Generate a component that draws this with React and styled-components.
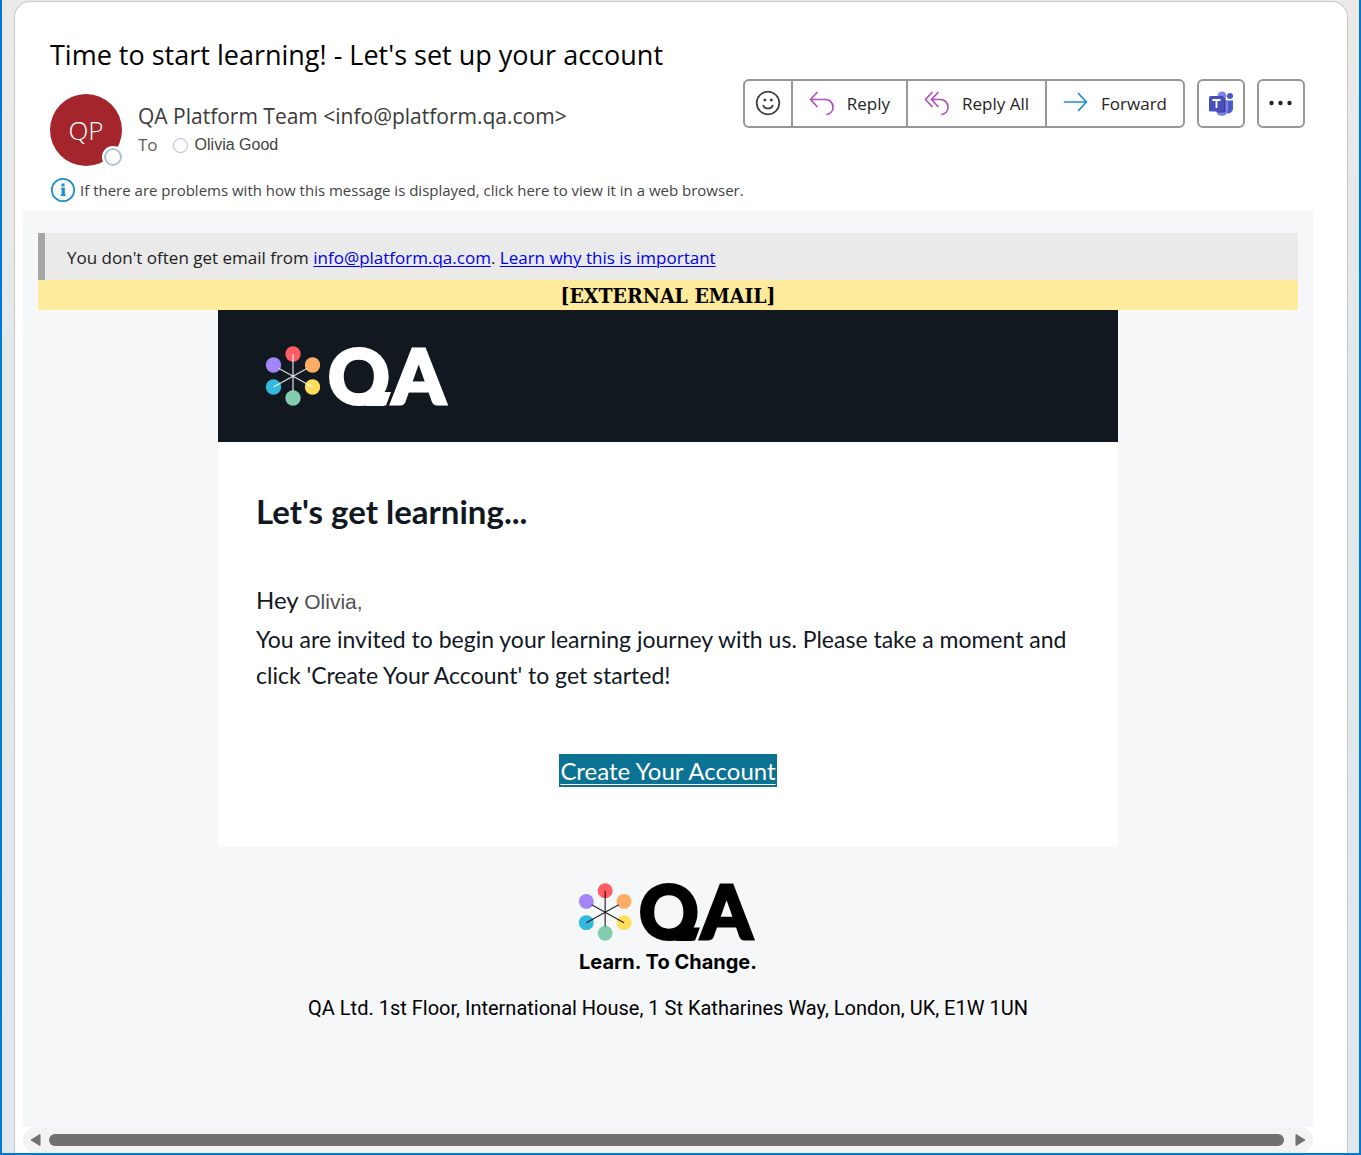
import React from "react";
import styled, { createGlobalStyle } from "styled-components";

const ui = `"Open Sans", "Noto Sans", sans-serif`;
const lato = `Lato, sans-serif`;

const Global = createGlobalStyle`
  *, *::before, *::after { box-sizing: border-box; }
  body { margin: 0; font-family: ${ui}; background: #fff; }
  h1, h2, p { margin: 0; font-weight: 400; }
  button { font: inherit; color: inherit; background: none; border: 0; padding: 0; cursor: pointer; }
`;

const Frame = styled.div`
  display: flex;
  min-height: 100vh;
  padding: 1px 11px 0 12px;
  border: solid #0078d4;
  border-width: 0 2px 2px;
  background: linear-gradient(#ebeae8, #e2e9ec 30%, #e0e8ee);
`;

const Pane = styled.main`
  flex: 1;
  min-width: 0;
  display: flex;
  flex-direction: column;
  padding: 0 34px 0 8px;
  background: #fff;
  border: 1px solid #c8c8c8;
  border-bottom: 0;
  border-radius: 16px 16px 0 0;
`;

const Header = styled.header`
  display: flex;
  flex-direction: column;
  padding: 33px 8px 7px 27px;
`;

const Subject = styled.h1`
  margin-bottom: 4px;
  font-size: 27px;
  line-height: 40px;
  color: #000;
`;

const SenderRow = styled.div`
  display: flex;
  justify-content: space-between;
  align-items: flex-start;
  gap: 24px;
`;

const Sender = styled.div`
  display: flex;
  gap: 16px;
  padding-top: 15px;
`;

const Avatar = styled.div`
  position: relative;
  display: grid;
  place-items: center;
  width: 72px;
  height: 72px;
  border-radius: 50%;
  background: #a4262c;
  color: #fff;
  font-size: 26px;
  font-weight: 300;
`;

const Presence = styled.span`
  position: absolute;
  right: -2px;
  bottom: -2px;
  width: 22px;
  height: 22px;
  border-radius: 50%;
  border: 2px solid #fff;
  background: #fff;
  box-shadow: inset 0 0 0 2px #a8c0cc;
`;

const SenderText = styled.div`
  display: flex;
  flex-direction: column;
  padding-top: 6px;
`;

const From = styled.p`
  font-size: 21px;
  line-height: 32px;
  color: #3b3a39;
`;

const To = styled.p`
  display: flex;
  align-items: center;
  line-height: 26px;
  font-size: 17px;
  color: #605e5c;
`;

const Dot = styled.span`
  width: 15px;
  height: 15px;
  margin: 0 7px 0 15px;
  border: 1px solid #a8c0cc;
  border-radius: 50%;
`;

const Recipient = styled.span`
  font-family: "Liberation Sans", Arial, sans-serif;
  font-size: 16px;
  color: #444;
`;

const Toolbar = styled.div`
  display: flex;
  gap: 12px;
`;

const Group = styled.div`
  display: flex;
  height: 49px;
  border: 2px solid #979797;
  border-radius: 6px;
`;

const Action = styled.button`
  display: flex;
  align-items: center;
  justify-content: center;
  gap: 12px;
  min-width: 44px;
  padding: 0 ${(p) => (p.$wide ? 16 : 0)}px;
  font-size: 17px;
  color: #252423;
  &:not(:last-child) { min-width: 46px; }
  & + & { border-left: 2px solid #979797; }
`;

const Notice = styled.button`
  display: flex;
  align-items: center;
  gap: 4px;
  margin-top: 11px;
  font-size: 15px;
  line-height: 26px;
  color: #444;
  text-align: left;
`;

const Mail = styled.section`
  flex: 1;
  padding: 23px 15px 32px;
  background: #f5f7f9;
`;

const Warning = styled.p`
  padding: 11px 22px 9px;
  border-left: 7px solid #a6a6a6;
  background: #eaeaea;
  font-size: 17px;
  line-height: 27px;
  color: #212121;
  a { color: #0000ee; text-underline-offset: 2px; text-decoration-thickness: 1px; }
`;

const External = styled.p`
  padding-top: 2px;
  background: #ffeb9c;
  color: #000;
  font-family: "DejaVu Serif Condensed", "DejaVu Serif", serif;
  font-size: 21px;
  font-weight: 700;
  line-height: 28px;
  text-align: center;
`;

const Letter = styled.article`
  max-width: 900px;
  margin: 0 auto;
  background: #fff;
  color: #11181f;
  font-family: ${lato};
`;

const Brand = styled.div`
  display: flex;
  padding: 36px 48px;
  background: #11181f;
`;

const Content = styled.div`
  display: flex;
  flex-direction: column;
  padding: 51px 38px 60px;
`;

const Title = styled.h2`
  font-size: 33px;
  font-weight: 700;
  line-height: 36px;
  margin-bottom: 51px;
`;

const Greeting = styled.p`
  font-size: 24px;
  line-height: 39px;
`;

const Invitation = styled.p`
  font-size: 23px;
  line-height: 36px;
`;

const Name = styled.span`
  font-family: "Liberation Sans", Arial, sans-serif;
  font-size: 21px;
  color: #505050;
`;

const Cta = styled.a`
  align-self: center;
  margin-top: 61px;
  padding: 0 1px;
  background: #0b7294;
  color: #fff;
  font-size: 24px;
  line-height: 33px;
  text-decoration: underline;
  text-decoration-thickness: 1px;
  text-underline-offset: 4px;
`;

const Footer = styled.footer`
  display: flex;
  flex-direction: column;
  align-items: center;
  padding-top: 36px;
  color: #000;
`;

const Tagline = styled.p`
  font-family: Inter, sans-serif;
  font-size: 20px;
  font-weight: 700;
  line-height: 32px;
  padding-top: 5px;
`;

const Address = styled.p`
  margin-top: 15px;
  font-family: Roboto, sans-serif;
  font-size: 20px;
  line-height: 30px;
  text-align: center;
`;

const ScrollTrack = styled.div`
  display: flex;
  align-items: center;
  gap: 8px;
  height: 26px;
  padding: 0 7px;
  border-radius: 13px;
  background: #f3f3f3;
`;

const ScrollThumb = styled.div`
  flex: 1;
  height: 12px;
  border-radius: 6px;
  background: #707070;
`;

const ScrollButton = styled.button`
  display: grid;
  width: 11px;
  &:last-child { margin-left: 3px; }
`;

const LogoSvg = styled.svg`
  display: block;
  overflow: visible;
`;

const petals = [
  ["#ff5c64", 27, 8],
  ["#ffad66", 46.5, 19],
  ["#ffde59", 46.5, 41],
  ["#83ccaf", 27, 52],
  ["#33b9de", 7.5, 41],
  ["#a286f9", 7.5, 19],
];

function QaLogo({ id, ink, width, height }) {
  return (
    <LogoSvg width={width} height={height} viewBox="0 0 184 60" role="img" aria-label="QA">
      {petals.map(([fill, x, y]) => (
        <circle key={fill} cx={x} cy={y} r="7.7" fill={fill} />
      ))}
      <path d="M27 8V45M7.5 41L41 22.5M13 22.5L46.5 41" stroke={ink} strokeWidth="1.2" opacity=".85" fill="none" />
      <clipPath id={id}>
        <rect x="56" y="-1" width="128" height="61" />
      </clipPath>
      <g clipPath={`url(#${id})`} fill={ink}>
        <text
          y="58"
          fontFamily="Lato, sans-serif"
          fontWeight="900"
          fontSize="76"
          stroke={ink}
          strokeWidth="3"
        >
          <tspan x="62">Q</tspan>
          <tspan x="126">A</tspan>
        </text>
        <path d="M94 59.5H120L125 46H112L94 52Z" />
      </g>
    </LogoSvg>
  );
}

const stroke = { fill: "none", strokeWidth: 1.7, strokeLinecap: "round", strokeLinejoin: "round" };

const Smile = () => (
  <svg width="26" height="26" viewBox="0 0 26 26" {...stroke} stroke="#3b3a39">
    <circle cx="13" cy="12" r="11.3" />
    <path d="M8.3 14.5c1.2 4 8.2 4 9.4 0" />
    <circle cx="9.8" cy="9" r="1" fill="#3b3a39" strokeWidth="1" />
    <circle cx="16.2" cy="9" r="1" fill="#3b3a39" strokeWidth="1" />
  </svg>
);

const ReplyIcon = () => (
  <svg width="26" height="26" viewBox="0 0 26 26" {...stroke} stroke="#b14fc0">
    <path d="M8 1.5L1.5 8.5L8 15.5M1.5 8.5H16.5a7.5 7.5 0 0 1 7.5 7.5a7.5 7.5 0 0 1-6 7.5" />
  </svg>
);

const ReplyAllIcon = () => (
  <svg width="26" height="26" viewBox="0 0 26 26" {...stroke} stroke="#b14fc0">
    <path d="M8 1.5L1.5 8.5L8 15.5M14 1.5L7.5 8.5L14 15.5M7.5 8.5H16.5a7.5 7.5 0 0 1 7.5 7.5a7.5 7.5 0 0 1-6 7.5" />
  </svg>
);

const ForwardIcon = () => (
  <svg width="26" height="26" viewBox="0 0 26 26" {...stroke} stroke="#1e8bcd">
    <path d="M1.5 11H23.5M15.5 2.5L23.5 11L15.5 19.5" />
  </svg>
);

const TeamsIcon = () => (
  <svg width="26" height="26" viewBox="0 0 26 26">
    <circle cx="22" cy="5" r="3" fill="#4f57c8" />
    <path d="M18 9.5H25v8.5a5 5 0 0 1-7 4z" fill="#4f57c8" />
    <circle cx="14" cy="5" r="4.5" fill="#7b83eb" />
    <path d="M8 9.5H20v9.5a6 6 0 0 1-12 0z" fill="#7b83eb" />
    <path d="M8 7H16a1.5 1.5 0 0 1 1.5 1.5V20a1.5 1.5 0 0 1-1.5 1.5H9z" fill="#3a3f94" />
    <rect x="1" y="5" width="15" height="15.5" rx="1.5" fill="#4850bb" />
    <path d="M4.5 9H12.5M8.5 9V17" stroke="#fff" strokeWidth="1.8" />
  </svg>
);

const MoreIcon = () => (
  <svg width="26" height="26" viewBox="0 0 26 26" fill="#252423">
    <circle cx="3.5" cy="12" r="2.2" />
    <circle cx="12.5" cy="12" r="2.2" />
    <circle cx="21.5" cy="12" r="2.2" />
  </svg>
);

const InfoIcon = () => (
  <svg width="26" height="26" viewBox="0 0 26 26">
    <circle cx="13" cy="13" r="11.2" fill="#fafafa" stroke="#1e8bcd" strokeWidth="1.7" />
    <path d="M11 11.5h3V18M10.5 18.3H15.5" stroke="#1e8bcd" strokeWidth="1.6" fill="none" />
    <path d="M13 11V18.5" stroke="#1e8bcd" strokeWidth="2.6" />
    <rect x="11.5" y="6.5" width="3" height="3" fill="#1e8bcd" />
  </svg>
);

const Arrow = ({ d }) => (
  <svg width="11" height="14" viewBox="0 0 11 14">
    <path d={d} fill="#707070" stroke="#707070" strokeLinejoin="round" />
  </svg>
);

export default function App() {
  return (
    <Frame>
      <Global />
      <Pane>
        <Header>
          <Subject>Time to start learning! - Let's set up your account</Subject>
          <SenderRow>
            <Sender>
              <Avatar>
                QP
                <Presence />
              </Avatar>
              <SenderText>
                <From>QA Platform Team &lt;info@platform.qa.com&gt;</From>
                <To>
                  To <Dot /> <Recipient>Olivia Good</Recipient>
                </To>
              </SenderText>
            </Sender>
            <Toolbar>
              <Group>
                <Action aria-label="React"><Smile /></Action>
                <Action $wide><ReplyIcon />Reply</Action>
                <Action $wide><ReplyAllIcon />Reply All</Action>
                <Action $wide><ForwardIcon />Forward</Action>
              </Group>
              <Group><Action aria-label="Share to Teams"><TeamsIcon /></Action></Group>
              <Group><Action aria-label="More actions"><MoreIcon /></Action></Group>
            </Toolbar>
          </SenderRow>
          <Notice>
            <InfoIcon />
            If there are problems with how this message is displayed, click here to view it in a web browser.
          </Notice>
        </Header>
        <Mail>
          <Warning>
            You don't often get email from <a href="mailto:info@platform.qa.com">info@platform.qa.com</a>.{" "}
            <a href="#learn">Learn why this is important</a>
          </Warning>
          <External>[EXTERNAL EMAIL]</External>
          <Letter>
            <Brand><QaLogo id="brand-mark" ink="#fff" width={184} height={60} /></Brand>
            <Content>
              <Title>Let's get learning...</Title>
              <Greeting>Hey <Name>Olivia,</Name></Greeting>
              <Invitation>
                You are invited to begin your learning journey with us. Please take a moment and click
                'Create Your Account' to get started!
              </Invitation>
              <Cta href="#create">Create Your Account</Cta>
            </Content>
          </Letter>
          <Footer>
            <QaLogo id="footer-mark" ink="#000" width={178} height={58} />
            <Tagline>Learn. To Change.</Tagline>
            <Address>QA Ltd. 1st Floor, International House, 1 St Katharines Way, London, UK, E1W 1UN</Address>
          </Footer>
        </Mail>
        <ScrollTrack>
          <ScrollButton aria-label="Scroll left"><Arrow d="M10 1.5V12.5L1 7Z" /></ScrollButton>
          <ScrollThumb />
          <ScrollButton aria-label="Scroll right"><Arrow d="M1 1.5V12.5L10 7Z" /></ScrollButton>
        </ScrollTrack>
      </Pane>
    </Frame>
  );
}
